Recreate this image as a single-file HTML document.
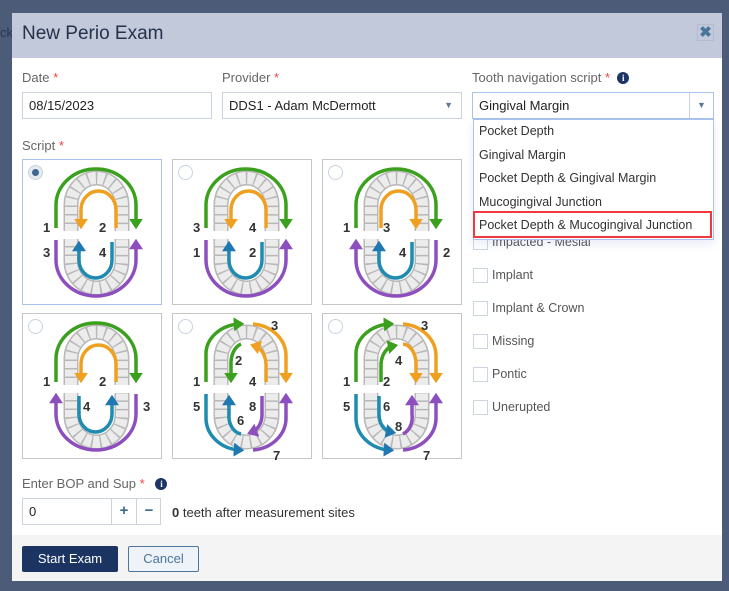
<!DOCTYPE html>
<html><head><meta charset="utf-8"><style>
*{box-sizing:border-box;margin:0;padding:0}
body{width:729px;height:591px;background:#4c5b78;font-family:"Liberation Sans",sans-serif;font-size:13px;color:#333;position:relative;overflow:hidden}
.a{position:absolute}
.modal{left:12px;top:13px;width:710px;height:568px;background:#fff}
.hdr{left:12px;top:13px;width:710px;height:45px;background:#c1c9da}
.lbl{color:#666;font-size:13px}
.req{color:#e44}
.inp{border:1px solid #ccd3dd;background:#fff;height:27px;padding:0 6px;line-height:25px;color:#222}
.box{border:1px solid #c6c6c6;width:140px;height:146px;background:#fff}
.box.sel{border-color:#a9c3ec}
.rad{position:absolute;left:5px;top:5px;width:15px;height:15px;border:1px solid #c6d3e3;border-radius:50%;background:#fff}
.box svg{position:absolute;left:0;top:0}
.dd{left:473px;top:119px;width:241px;height:121px;border:1px solid #a9c3ec;background:#fff;box-shadow:0 4px 10px rgba(100,130,190,.15)}
.dd div{position:absolute;left:5px;color:#333;font-size:12.5px}
.cb{position:absolute;left:473px;width:15px;height:15px;border:1px solid #ccd6e2;background:#fff}
.cbl{position:absolute;left:492px;color:#555;font-size:12.5px}
.info{display:inline-block;width:12px;height:12px;border-radius:50%;background:#1d3564;color:#fff;font-size:9px;font-weight:bold;text-align:center;line-height:12px;font-family:"Liberation Serif",serif;vertical-align:1px}
.n{font:bold 13px "Liberation Sans",sans-serif;fill:#333}
</style></head><body>
<div class="a" style="left:0;top:25px;color:#2c3850;font-size:13px;">ck</div>
<div class="a modal"></div>
<div class="a hdr"></div>
<div class="a" style="left:22px;top:23px;font-size:19px;color:#26324a">New Perio Exam</div>
<div class="a" style="left:697px;top:24px;width:17px;height:17px;border:1px solid #b3bccd;color:#49779a;font-size:15px;font-weight:bold;text-align:center;line-height:15px">✖</div>

<div class="a lbl" style="left:22px;top:70px">Date <span class="req">*</span></div>
<div class="a lbl" style="left:222px;top:70px">Provider <span class="req">*</span></div>
<div class="a lbl" style="left:472px;top:70px">Tooth navigation script <span class="req">*</span> &nbsp;<span class="info">i</span></div>

<div class="a inp" style="left:22px;top:92px;width:190px">08/15/2023</div>
<div class="a inp" style="left:222px;top:92px;width:240px">DDS1 - Adam McDermott<span style="position:absolute;right:8px;top:0;color:#5a7a98;font-size:9px">▼</span></div>
<div class="a inp" style="left:472px;top:92px;width:242px;border-color:#a9c3ec">Gingival Margin<span style="position:absolute;right:0;top:0;width:24px;height:25px;border-left:1px solid #ccd3dd;color:#5a7a98;font-size:9px;text-align:center">▼</span></div>

<div class="a lbl" style="left:22px;top:138px">Script <span class="req">*</span></div>

<svg width="0" height="0" style="position:absolute">
<defs>
<marker id="mg" markerWidth="4" markerHeight="4" refX="1.5" refY="2" orient="auto" markerUnits="strokeWidth"><path d="M0,0 L3,2 L0,4Z" fill="#3aa01d"/></marker>
<marker id="mo" markerWidth="4" markerHeight="4" refX="1.5" refY="2" orient="auto" markerUnits="strokeWidth"><path d="M0,0 L3,2 L0,4Z" fill="#f0a020"/></marker>
<marker id="mp" markerWidth="4" markerHeight="4" refX="1.5" refY="2" orient="auto" markerUnits="strokeWidth"><path d="M0,0 L3,2 L0,4Z" fill="#8d4fbd"/></marker>
<marker id="mb" markerWidth="4" markerHeight="4" refX="1.5" refY="2" orient="auto" markerUnits="strokeWidth"><path d="M0,0 L3,2 L0,4Z" fill="#1f78b0"/></marker>
<symbol id="teeth" viewBox="0 0 140 146">
<path d="M48,71 V45 A25.5,27 0 0 1 99,45 V71" fill="none" stroke="#b8b8b8" stroke-width="15"/>
<path d="M48,71 V45 A25.5,27 0 0 1 99,45 V71" fill="none" stroke="#ececec" stroke-width="12" stroke-dasharray="7 1.5"/>
<path d="M48,79 V101 A25.5,27 0 0 0 99,101 V79" fill="none" stroke="#b8b8b8" stroke-width="15"/>
<path d="M48,79 V101 A25.5,27 0 0 0 99,101 V79" fill="none" stroke="#ececec" stroke-width="12" stroke-dasharray="7 1.5"/>
</symbol>
</defs></svg>

<!-- Box 1 -->
<div class="a box sel" style="left:22px;top:159px"><div class="rad" style="background:#e6eaf0"><div style="position:absolute;left:3px;top:3px;width:7px;height:7px;border-radius:50%;background:#3f6690"></div></div>
<svg width="140" height="146"><use href="#teeth"/>
<g fill="none" stroke-width="3.5">
<path d="M33,68 V45 A40,36 0 0 1 113,45 V64" stroke="#3aa01d" marker-end="url(#mg)"/>
<path d="M93,68 V50 A17.5,19 0 0 0 58,50 V64" stroke="#f0a020" marker-end="url(#mo)"/>
<path d="M33,80 V100 A40,36 0 0 0 113,100 V84" stroke="#8d4fbd" marker-end="url(#mp)"/>
<path d="M89,82 V100 A16.5,18 0 0 1 56,100 V86" stroke="#1f8bb0" marker-end="url(#mb)"/>
</g>
<text class="n" x="20" y="72">1</text><text class="n" x="76" y="72">2</text><text class="n" x="20" y="97">3</text><text class="n" x="76" y="97">4</text>
</svg></div>

<!-- Box 2 -->
<div class="a box" style="left:172px;top:159px"><div class="rad"></div>
<svg width="140" height="146"><use href="#teeth"/>
<g fill="none" stroke-width="3.5">
<path d="M33,68 V45 A40,36 0 0 1 113,45 V64" stroke="#3aa01d" marker-end="url(#mg)"/>
<path d="M93,68 V50 A17.5,19 0 0 0 58,50 V64" stroke="#f0a020" marker-end="url(#mo)"/>
<path d="M33,80 V100 A40,36 0 0 0 113,100 V84" stroke="#8d4fbd" marker-end="url(#mp)"/>
<path d="M89,82 V100 A16.5,18 0 0 1 56,100 V86" stroke="#1f8bb0" marker-end="url(#mb)"/>
</g>
<text class="n" x="20" y="72">3</text><text class="n" x="76" y="72">4</text><text class="n" x="20" y="97">1</text><text class="n" x="76" y="97">2</text>
</svg></div>

<!-- Box 3 -->
<div class="a box" style="left:322px;top:159px"><div class="rad"></div>
<svg width="140" height="146"><use href="#teeth"/>
<g fill="none" stroke-width="3.5">
<path d="M33,68 V45 A40,36 0 0 1 113,45 V64" stroke="#3aa01d" marker-end="url(#mg)"/>
<path d="M58,68 V50 A17.5,19 0 0 1 93,50 V64" stroke="#f0a020" marker-end="url(#mo)"/>
<path d="M113,80 V100 A40,36 0 0 1 33,100 V84" stroke="#8d4fbd" marker-end="url(#mp)"/>
<path d="M89,82 V100 A16.5,18 0 0 1 56,100 V86" stroke="#1f8bb0" marker-end="url(#mb)"/>
</g>
<text class="n" x="20" y="72">1</text><text class="n" x="60" y="72">3</text><text class="n" x="120" y="97">2</text><text class="n" x="76" y="97">4</text>
</svg></div>

<!-- Box 4 -->
<div class="a box" style="left:22px;top:313px"><div class="rad"></div>
<svg width="140" height="146"><use href="#teeth"/>
<g fill="none" stroke-width="3.5">
<path d="M33,68 V45 A40,36 0 0 1 113,45 V64" stroke="#3aa01d" marker-end="url(#mg)"/>
<path d="M93,68 V50 A17.5,19 0 0 0 58,50 V64" stroke="#f0a020" marker-end="url(#mo)"/>
<path d="M113,80 V100 A40,36 0 0 1 33,100 V84" stroke="#8d4fbd" marker-end="url(#mp)"/>
<path d="M56,82 V100 A16.5,18 0 0 0 89,100 V86" stroke="#1f8bb0" marker-end="url(#mb)"/>
</g>
<text class="n" x="20" y="72">1</text><text class="n" x="76" y="72">2</text><text class="n" x="120" y="97">3</text><text class="n" x="60" y="97">4</text>
</svg></div>

<!-- Box 5 -->
<div class="a box" style="left:172px;top:313px"><div class="rad"></div>
<svg width="140" height="146"><use href="#teeth"/>
<g fill="none" stroke-width="3.5">
<path d="M33,68 V40 A36,30 0 0 1 66,10" stroke="#3aa01d" marker-end="url(#mg)"/>
<path d="M80,10 A36,32 0 0 1 113,42 V64" stroke="#f0a020" marker-end="url(#mo)"/>
<path d="M68,30 A14,20 0 0 0 58,50 V64" stroke="#3aa01d" marker-end="url(#mg)"/>
<path d="M93,68 V50 A14,20 0 0 0 82,32" stroke="#f0a020" marker-end="url(#mo)"/>
<path d="M33,80 V104 A36,32 0 0 0 66,136" stroke="#1f8bb0" marker-end="url(#mb)"/>
<path d="M80,136 A36,32 0 0 0 113,104 V84" stroke="#8d4fbd" marker-end="url(#mp)"/>
<path d="M68,120 A14,18 0 0 1 56,100 V86" stroke="#1f8bb0" marker-end="url(#mb)"/>
<path d="M89,82 V100 A14,18 0 0 1 79,118" stroke="#8d4fbd" marker-end="url(#mp)"/>
</g>
<text class="n" x="20" y="72">1</text><text class="n" x="62" y="51">2</text><text class="n" x="98" y="16">3</text><text class="n" x="76" y="72">4</text>
<text class="n" x="20" y="97">5</text><text class="n" x="64" y="111">6</text><text class="n" x="100" y="146">7</text><text class="n" x="76" y="97">8</text>
</svg></div>

<!-- Box 6 -->
<div class="a box" style="left:322px;top:313px"><div class="rad"></div>
<svg width="140" height="146"><use href="#teeth"/>
<g fill="none" stroke-width="3.5">
<path d="M33,68 V40 A36,30 0 0 1 66,10" stroke="#3aa01d" marker-end="url(#mg)"/>
<path d="M80,10 A36,32 0 0 1 113,42 V64" stroke="#f0a020" marker-end="url(#mo)"/>
<path d="M58,68 V50 A14,20 0 0 1 70,32" stroke="#3aa01d" marker-end="url(#mg)"/>
<path d="M80,30 A14,20 0 0 1 93,50 V64" stroke="#f0a020" marker-end="url(#mo)"/>
<path d="M33,80 V104 A36,32 0 0 0 66,136" stroke="#1f8bb0" marker-end="url(#mb)"/>
<path d="M80,136 A36,32 0 0 0 113,104 V84" stroke="#8d4fbd" marker-end="url(#mp)"/>
<path d="M56,82 V100 A14,18 0 0 0 68,118" stroke="#1f8bb0" marker-end="url(#mb)"/>
<path d="M80,120 A14,18 0 0 0 89,100 V86" stroke="#8d4fbd" marker-end="url(#mp)"/>
</g>
<text class="n" x="20" y="72">1</text><text class="n" x="60" y="72">2</text><text class="n" x="98" y="16">3</text><text class="n" x="72" y="51">4</text>
<text class="n" x="20" y="97">5</text><text class="n" x="60" y="97">6</text><text class="n" x="100" y="146">7</text><text class="n" x="72" y="117">8</text>
</svg></div>

<!-- Checkboxes -->
<div class="cb" style="top:235px"></div><div class="cbl" style="top:235px">Impacted - Mesial</div>
<div class="cb" style="top:268px"></div><div class="cbl" style="top:268px">Implant</div>
<div class="cb" style="top:301px"></div><div class="cbl" style="top:301px">Implant &amp; Crown</div>
<div class="cb" style="top:334px"></div><div class="cbl" style="top:334px">Missing</div>
<div class="cb" style="top:367px"></div><div class="cbl" style="top:367px">Pontic</div>
<div class="cb" style="top:400px"></div><div class="cbl" style="top:400px">Unerupted</div>

<!-- Dropdown -->
<div class="a dd">
<div style="top:4px">Pocket Depth</div>
<div style="top:28px">Gingival Margin</div>
<div style="top:51px">Pocket Depth &amp; Gingival Margin</div>
<div style="top:75px">Mucogingival Junction</div>
<div style="top:98px">Pocket Depth &amp; Mucogingival Junction</div>
</div>
<div class="a" style="left:473px;top:211px;width:239px;height:27px;border:2px solid #f0393f"></div>

<!-- BOP -->
<div class="a lbl" style="left:22px;top:476px">Enter BOP and Sup <span class="req">*</span> &nbsp;&nbsp;<span class="info">i</span></div>
<div class="a inp" style="left:22px;top:498px;width:139px;height:27px">0</div>
<div class="a" style="left:111px;top:499px;width:1px;height:25px;background:#ccd3dd"></div>
<div class="a" style="left:136px;top:499px;width:1px;height:25px;background:#ccd3dd"></div>
<div class="a" style="left:112px;top:502px;width:24px;text-align:center;color:#3d6a90;font-weight:bold;font-size:15px">+</div>
<div class="a" style="left:137px;top:502px;width:24px;text-align:center;color:#3d6a90;font-weight:bold;font-size:15px">−</div>
<div class="a" style="left:172px;top:505px;color:#333"><b>0</b> teeth after measurement sites</div>

<!-- Footer -->
<div class="a" style="left:12px;top:535px;width:710px;height:46px;background:#f4f4f4"></div>
<div class="a" style="left:22px;top:546px;width:96px;height:26px;background:#1c3461;border-radius:2px;color:#fff;text-align:center;line-height:26px">Start Exam</div>
<div class="a" style="left:128px;top:546px;width:71px;height:26px;background:#eef2f9;border:1px solid #4e7698;border-radius:2px;color:#4e7698;text-align:center;line-height:24px">Cancel</div>
</body></html>
